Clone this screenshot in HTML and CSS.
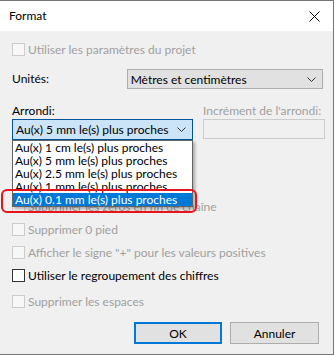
FILE: index.html
```html
<!DOCTYPE html>
<html lang="fr">
<head>
    <meta charset="UTF-8">
    <title>Format</title>
    <link rel="stylesheet" href="styles.css">
</head>
<body>

    <div class="window">
        <!-- Title bar -->
        <div class="titlebar">
            <span class="title">Format</span>
            <svg class="close" width="11" height="11" viewBox="0 0 11 11">
                <path d="M0.5 0.5 L10.5 10.5 M10.5 0.5 L0.5 10.5" stroke="#000" stroke-width="1" fill="none"/>
            </svg>
        </div>

        <!-- Dialog body -->
        <div class="body">
            <div class="check disabled">
                <span class="box"></span>
                <span>Utiliser les paramètres du projet</span>
            </div>

            <div class="units-row">
                <span class="label units-label">Unités:</span>
                <div class="combo units-combo">
                    <span>Mètres et centimètres</span>
                    <svg class="chevron" width="9" height="5" viewBox="0 0 9 5"><path d="M0.5 0.5 L4.5 4.5 L8.5 0.5" stroke="#333" fill="none"/></svg>
                </div>
            </div>

            <div class="round-row">
                <div class="round-col">
                    <span class="label">Arrondi:</span>
                    <div class="combo round-combo">
                        <span>Au(x) 5 mm le(s) plus proches</span>
                        <svg class="chevron" width="9" height="5" viewBox="0 0 9 5"><path d="M0.5 0.5 L4.5 4.5 L8.5 0.5" stroke="#333" fill="none"/></svg>
                    </div>
                </div>
                <div class="inc-col">
                    <span class="label disabled-text">Incrément de l'arrondi:</span>
                    <div class="input"></div>
                </div>
            </div>

            <div class="checks">
                <div class="check disabled"><span class="box"></span><span>Supprimer les zéros en fin de chaîne</span></div>
                <div class="check disabled"><span class="box"></span><span>Supprimer 0 pied</span></div>
                <div class="check disabled"><span class="box"></span><span>Afficher le signe "+" pour les valeurs positives</span></div>
                <div class="check"><span class="box"></span><span>Utiliser le regroupement des chiffres</span></div>
                <div class="check disabled last"><span class="box"></span><span>Supprimer les espaces</span></div>
            </div>

            <div class="buttons">
                <button class="btn default">OK</button>
                <button class="btn">Annuler</button>
            </div>
        </div>

        <!-- Open dropdown list of the Arrondi combo -->
        <ul class="dropdown">
            <li>Au(x) 1 cm le(s) plus proches</li>
            <li>Au(x) 5 mm le(s) plus proches</li>
            <li>Au(x) 2.5 mm le(s) plus proches</li>
            <li>Au(x) 1 mm le(s) plus proches</li>
            <li class="selected">Au(x) 0.1 mm le(s) plus proches</li>
        </ul>

        <!-- Red annotation -->
        <div class="highlight"></div>
    </div>

</body>
</html>
```

FILE: styles.css
```css
/* Page */
body {
    margin: 0;
    padding: 0;
    background-color: #fff;
    font-family: 'Lato', 'Segoe UI', sans-serif;
    font-size: 12px;
    color: #000;
}

/* Window frame */
.window {
    position: relative;
    width: 333px;
    height: 353px;
    border-top: 1px solid #767676;
    border-right: 1px solid #767676;
    border-bottom: 1px solid #767676;
    background-color: #f0f0f0;
    display: flex;
    flex-direction: column;
}

.titlebar {
    height: 30px;
    background-color: #fff;
    display: flex;
    align-items: center;
    justify-content: space-between;
    padding: 0 9px 0 9px;
}

.title {
    font-size: 12px;
    line-height: 30px;
}

.close {
    margin-right: 4px;
}

.body {
    flex: 1;
    display: flex;
    flex-direction: column;
    padding: 12px 10px 0 12px;
}

.label {
    line-height: 16px;
    white-space: nowrap;
}

.disabled-text {
    color: #a0a0a0;
}

/* Checkboxes */
.check {
    display: flex;
    align-items: center;
    height: 13px;
    gap: 3px;
    white-space: nowrap;
}

.check .box {
    width: 11px;
    height: 11px;
    border: 1px solid #333;
    background-color: #fff;
    flex-shrink: 0;
}

.check.disabled {
    color: #a0a0a0;
}

.check.disabled .box {
    border-color: #cccccc;
    background-color: #f7f7f7;
}

/* Combos */
.combo {
    display: flex;
    align-items: center;
    justify-content: space-between;
    box-sizing: border-box;
    border: 1px solid #adadad;
    background-color: #e1e1e1;
    padding: 0 6px 0 3px;
    white-space: nowrap;
}

.units-row {
    display: flex;
    align-items: center;
    margin-top: 13px;
}

.units-label {
    width: 115px;
}

.units-combo {
    width: 197px;
    height: 20px;
}

.round-row {
    display: flex;
    gap: 10px;
    margin-top: 14px;
}

.round-col,
.inc-col {
    display: flex;
    flex-direction: column;
}

.round-combo {
    width: 181px;
    height: 21px;
    border-color: #005499;
    background-color: #cce4f7;
}

.input {
    width: 122px;
    height: 20px;
    box-sizing: border-box;
    border: 1px solid #cccccc;
    background-color: #f0f0f0;
}

.checks {
    display: flex;
    flex-direction: column;
    gap: 10px;
    margin-top: 60px;
}

.check.last {
    margin-top: 3px;
}

/* Buttons */
.buttons {
    display: flex;
    justify-content: flex-end;
    gap: 8px;
    margin-top: 14px;
    padding-right: 4px;
}

.btn {
    width: 89px;
    height: 22px;
    box-sizing: border-box;
    border: 1px solid #adadad;
    background-color: #e1e1e1;
    font-family: inherit;
    font-size: 12px;
    color: #000;
    padding: 0;
}

.btn.default {
    width: 88px;
    border: 2px solid #0078d7;
}

/* Dropdown list */
.dropdown {
    position: absolute;
    left: 12px;
    top: 139px;
    width: 181px;
    box-sizing: border-box;
    margin: 0;
    padding: 0;
    list-style: none;
    background-color: #fff;
    border: 1px solid #646464;
    box-shadow: 2px 2px 3px rgba(0, 0, 0, 0.3);
}

.dropdown li {
    height: 13px;
    line-height: 13px;
    padding-left: 2px;
    white-space: nowrap;
}

.dropdown li.selected {
    background-color: #0078d7;
    color: #fff;
}

/* Annotation */
.highlight {
    position: absolute;
    left: 1px;
    top: 188px;
    width: 196px;
    height: 24px;
    box-sizing: border-box;
    border: 2px solid #e8141c;
    border-radius: 6px;
}
```
